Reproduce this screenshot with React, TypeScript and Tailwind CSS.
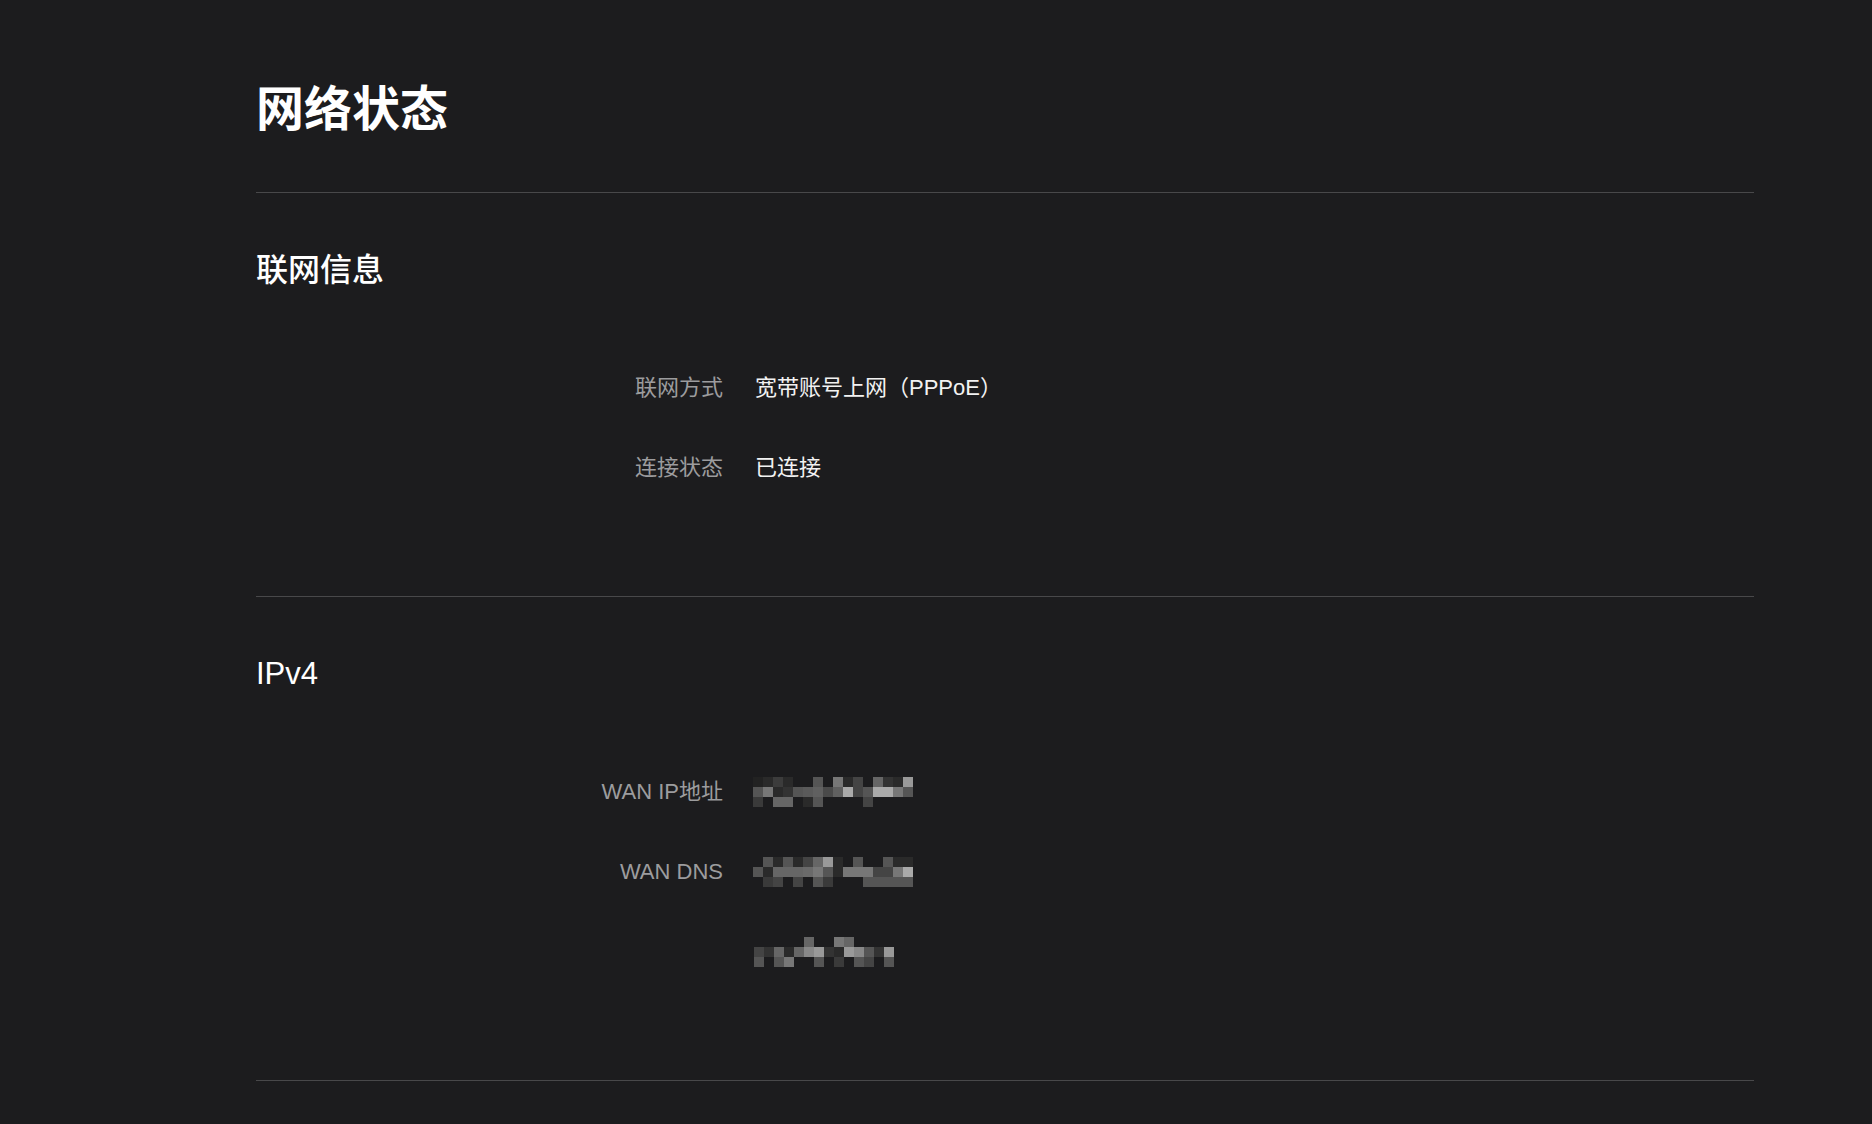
import React from 'react';

const FONT = { fontFamily: '"Liberation Sans", "Noto Sans CJK SC", sans-serif' };

const _ = '';

// masked values: 10px blocks, rows of grey levels
const MASK_IP: string[][] = [
  ['#222', '#2a2a2a', '#3c3c3c', '#2a2a2a', _, _, '#555', _, '#777', '#2a2a2a', '#444', _, '#666', '#333', '#2a2a2a', '#999'],
  ['#555', '#777', '#2a2a2a', '#333', '#555', '#5a5a5a', '#606060', '#4a4a4a', '#606060', '#aaa', '#444', '#555', '#aaa', '#aaa', '#777', '#555'],
  ['#3a3a3a', _, '#666', '#666', _, '#2a2a2a', '#555', _, _, _, _, '#444', _, _, _, _],
];

const MASK_DNS1: string[][] = [
  [_, '#555', '#2a2a2a', '#555', '#2a2a2a', '#444', '#666', '#999', '#2a2a2a', _, '#555', _, _, '#555', '#2a2a2a', '#2a2a2a'],
  ['#555', '#2a2a2a', '#666', '#666', '#666', '#6a6a6a', '#777', '#555', '#2a2a2a', '#777', '#777', '#777', '#444', '#444', '#777', '#aaa'],
  [_, '#3a3a3a', '#444', _, '#444', _, '#555', '#3a3a3a', _, _, _, '#555', '#555', '#555', '#555', '#555'],
];

const MASK_DNS2: string[][] = [
  [_, _, _, _, _, '#666', _, _, '#777', '#666', _, _, _, _],
  ['#444', '#333', '#666', '#2a2a2a', '#666', '#888', '#999', '#333', '#2a2a2a', '#999', '#888', '#555', '#333', '#999'],
  ['#555', _, '#555', '#777', _, _, '#555', _, '#3a3a3a', _, '#555', '#444', _, '#555'],
];

function Mask({ cells }: { cells: string[][] }) {
  const w = cells[0].length * 10;
  return (
    <svg width={w} height={30} viewBox={`0 0 ${w} 30`} className="block">
      {cells.map((row, r) =>
        row.map((c, i) => (c ? <rect key={`${r}-${i}`} x={i * 10} y={r * 10} width={10} height={10} fill={c} /> : null))
      )}
    </svg>
  );
}

function Row({ label, children }: { label?: string; children: React.ReactNode }) {
  return (
    <div className="flex items-center h-8 gap-[32px]">
      <div className="w-[467px] shrink-0 text-right text-[22px] leading-8 text-[#9c9c9e]">{label}</div>
      <div className="text-[22px] leading-8 text-[#f2f2f2] flex items-center">{children}</div>
    </div>
  );
}

function Section({ title, size, children }: { title: string; size: string; children: React.ReactNode }) {
  return (
    <section className="border-b border-[#48484a]">
      <h2 className={`mt-[57px] leading-10 font-medium text-white ${size}`}>{title}</h2>
      <div className="mt-[82px] mb-[112px] flex flex-col gap-[48px]">{children}</div>
    </section>
  );
}

export default function App() {
  return (
    <div className="min-h-screen bg-[#1c1c1e] pl-[256px]" style={FONT}>
      <div className="w-[1498px] pt-[82px]">
        <div className="border-b border-[#48484a] pb-[54px]">
          <h1 className="text-[48px] leading-[56px] font-bold text-white">网络状态</h1>
        </div>

        <Section title="联网信息" size="text-[32px]">
          <Row label="联网方式">宽带账号上网（PPPoE）</Row>
          <Row label="连接状态">已连接</Row>
        </Section>

        <Section title="IPv4" size="text-[31px]">
          <Row label="WAN IP地址">
            <div className="-ml-[2px]">
              <Mask cells={MASK_IP} />
            </div>
          </Row>
          <Row label="WAN DNS">
            <div className="-ml-[2px]">
              <Mask cells={MASK_DNS1} />
            </div>
          </Row>
          <Row>
            <div className="-ml-[1px]">
              <Mask cells={MASK_DNS2} />
            </div>
          </Row>
        </Section>
      </div>
    </div>
  );
}
